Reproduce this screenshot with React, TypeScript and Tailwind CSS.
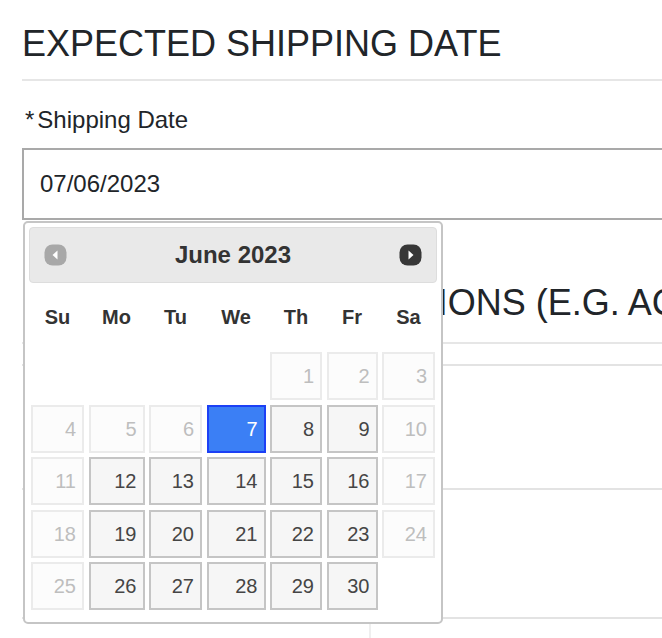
const days: { n: number; col: number; state: "off" | "on" | "active" }[] = [];
const offDays = [1, 2, 3, 4, 5, 6, 10, 11, 17, 18, 24, 25];
for (let n = 1; n <= 30; n++) {
  days.push({
    n,
    col: (n + 3) % 7,
    state: n === 7 ? "active" : offDays.includes(n) ? "off" : "on",
  });
}

const cellStyles = {
  off: "bg-[#fcfcfc] border-[#ebebeb] text-[#bebebe]",
  on: "bg-[#f6f6f6] border-[#c5c5c5] text-[#454545]",
  active: "bg-[#3b7ff5] border-[#1c40f5] text-white",
};

function CircleArrow({ dir, color }: { dir: "w" | "e"; color: string }) {
  return (
    <svg width="23" height="22" viewBox="0 0 23 22">
      <rect x="0.5" y="0.5" width="22" height="21" rx="8" fill={color} />
      {dir === "w" ? (
        <path d="M13.5 6.5 L8.5 11 L13.5 15.5 Z" fill="#fff" />
      ) : (
        <path d="M9.5 6.5 L14.5 11 L9.5 15.5 Z" fill="#fff" />
      )}
    </svg>
  );
}

function Datepicker() {
  const names = ["Su", "Mo", "Tu", "We", "Th", "Fr", "Sa"];
  return (
    <div className="absolute left-[23px] top-[221px] w-[420px] bg-white border-2 border-[#c5c5c5] rounded-[5px] p-[4px] pb-[12px] font-['Liberation_Sans',Arial,sans-serif]">
      <div className="h-[56px] bg-[#e9e9e9] border border-[#dddddd] rounded-[4px] flex items-center justify-between px-[14px]">
        <CircleArrow dir="w" color="#a8a8a8" />
        <span className="text-[24px] font-bold text-[#333333]">June 2023</span>
        <CircleArrow dir="e" color="#373737" />
      </div>
      <div className="ml-[2px] grid grid-cols-[53px_56px_53px_59px_52px_51px_53px] gap-x-[4.5px]">
        {names.map((d) => (
          <div key={d} className="h-[68px] flex items-center justify-center text-[20px] font-bold text-[#333333]">
            {d}
          </div>
        ))}
      </div>
      <div className="mt-[1px] ml-[2px] grid grid-cols-[53px_56px_53px_59px_52px_51px_53px] auto-rows-[48px] gap-x-[4.5px] gap-y-[4.5px]">
        {days.map((d) => (
          <div
            key={d.n}
            style={d.n === 1 ? { gridColumnStart: d.col + 1 } : undefined}
            className={`border-2 flex items-center justify-end pr-[6px] text-[20px] ${cellStyles[d.state]}`}
          >
            {d.n}
          </div>
        ))}
      </div>
    </div>
  );
}

export default function App() {
  return (
    <div className="relative w-[662px] h-[638px] overflow-hidden bg-white text-[#212529] font-['Liberation_Sans',Arial,sans-serif]">
      <div className="w-[1400px] pl-[22px]">
        <h3 className="mt-[22px] text-[36px] leading-[1.2]">EXPECTED SHIPPING DATE</h3>
        <div className="mt-[14px] h-[2px] bg-[#e6e6e6]" />

        <label className="block mt-[21px] text-[24px] leading-[36px] pl-[3px]">
          <span className="mr-[3px]">*</span>Shipping Date
        </label>
        <input
          readOnly
          value="07/06/2023"
          className="mt-[10px] block w-full h-[72px] border-2 border-[#a9a9a9] pl-[16px] text-[24px] text-[#212529] outline-none"
        />

        <h3 className="mt-[61px] text-[36px] leading-[1.2] whitespace-nowrap pl-[9px]">
          ADDITIONAL INSTRUCTIONS (E.G. ACCESS CODES)
        </h3>
        <div className="mt-[18px] h-[2px] bg-[#e6e6e6]" />

        <div className="mt-[20px] grid grid-cols-[347px_1fr]">
          <div className="h-[124px] border-t-2 border-[#e3e3e3]" />
          <div className="h-[124px] border-t-2 border-l-2 border-[#e3e3e3] border-l-[#efefef]" />
          <div className="h-[129px] border-t-2 border-[#e3e3e3]" />
          <div className="h-[129px] border-t-2 border-l-2 border-[#e3e3e3] border-l-[#efefef]" />
          <div className="h-[60px] border-t-2 border-[#e3e3e3]" />
          <div className="h-[60px] border-t-2 border-l-2 border-[#e3e3e3] border-l-[#efefef]" />
        </div>
      </div>
      <Datepicker />
    </div>
  );
}
